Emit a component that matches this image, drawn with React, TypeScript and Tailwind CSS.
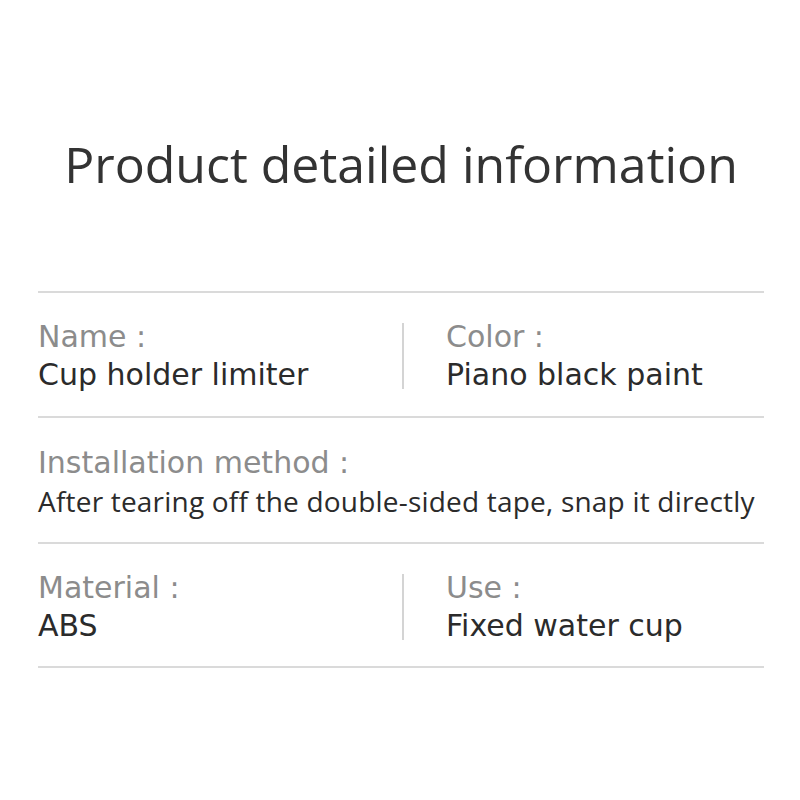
import React from "react";

const Divider = () => <div className="h-[2px] w-full bg-[#dadada]" />;

const wide = { fontFamily: '"DejaVu Sans", sans-serif' };

const Field = ({ label, value }: { label: string; value: string }) => (
  <div className="flex flex-col" style={wide}>
    <span className="text-[30px] leading-[38px] text-[#8c8c8c]">{label}</span>
    <span className="text-[30px] leading-[38px] text-[#2b2b2b]">{value}</span>
  </div>
);

const App = () => {
  return (
    <div
      className="w-[800px] h-[800px] bg-white pl-[38px] pr-[36px]"
      style={{ fontFamily: '"Open Sans", sans-serif' }}
    >
      <div className="h-[291px] pt-[132px] flex justify-center">
        <h1 className="text-[50px] leading-[64px] font-normal text-[#333333]">
          Product detailed information
        </h1>
      </div>
      <Divider />

      {/* name / color */}
      <div className="h-[123px] flex items-center pt-[3px]">
        <div className="w-[364px]">
          <Field label="Name :" value="Cup holder limiter" />
        </div>
        <div className="w-[2px] h-[66px] bg-[#d4d4d4]" />
        <div className="pl-[42px]">
          <Field label="Color :" value="Piano black paint" />
        </div>
      </div>
      <Divider />

      {/* installation */}
      <div className="h-[124px] flex items-center pt-[3px]">
        <div className="flex flex-col">
          <span
            className="text-[30px] leading-[38px] text-[#8c8c8c]"
            style={wide}
          >
            Installation method :
          </span>
          <span className="text-[28px] leading-[38px] tracking-[0.2px] text-[#2b2b2b]">
            After tearing off the double-sided tape, snap it directly
          </span>
        </div>
      </div>
      <Divider />

      {/* material / use */}
      <div className="h-[122px] flex items-center pt-[3px]">
        <div className="w-[364px]">
          <Field label="Material :" value="ABS" />
        </div>
        <div className="w-[2px] h-[66px] bg-[#d4d4d4]" />
        <div className="pl-[42px]">
          <Field label="Use :" value="Fixed water cup" />
        </div>
      </div>
      <Divider />
    </div>
  );
};

export default App;
